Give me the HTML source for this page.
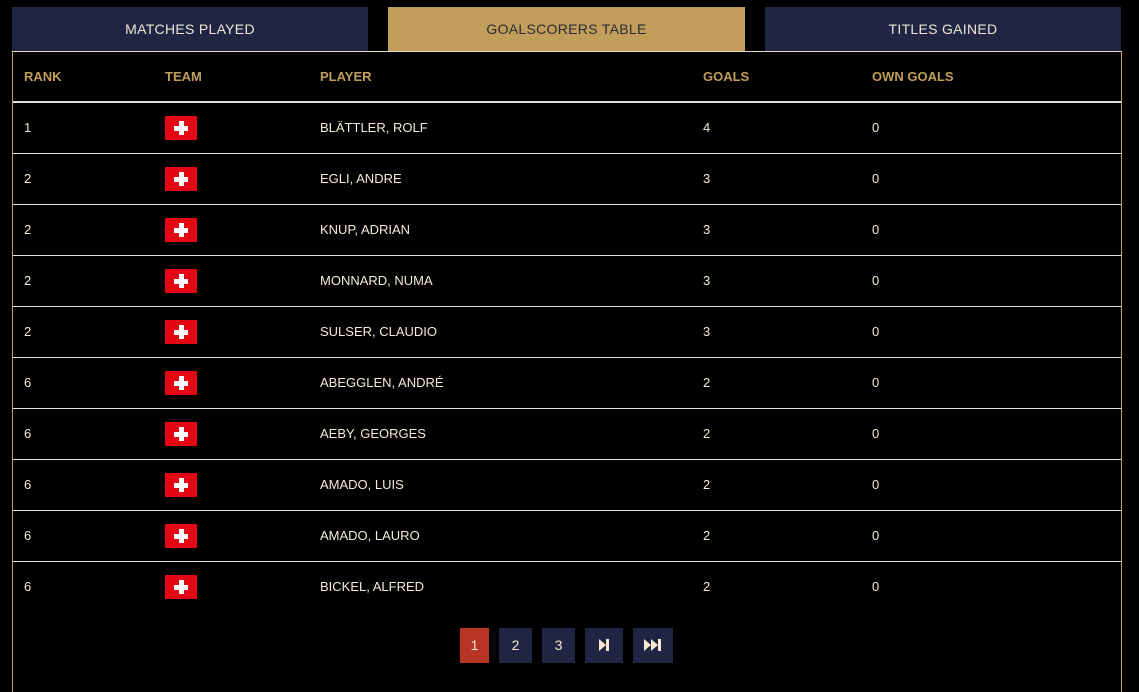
<!DOCTYPE html>
<html><head><style>
body{margin:0;background:#000;width:1139px;height:683px;overflow:hidden;font-family:"Liberation Sans",sans-serif;}
.tab{position:absolute;top:7px;height:44px;line-height:44px;text-align:center;font-size:14px;text-transform:uppercase;letter-spacing:0.3px;}
.box{position:absolute;left:12px;top:51px;width:1108px;height:640px;border-left:1px solid #c19e59;border-right:1px solid #c19e59;border-top:1px solid #e8dcc6;}
.row{position:absolute;left:0;width:1108px;height:50px;border-bottom:1px solid #e6e0d8;}
.c{position:absolute;top:0;line-height:50px;font-size:13px;color:#f3ead9;text-transform:uppercase;}
.h .c{color:#c19e59;font-weight:bold;}
.flag{position:absolute;left:152px;top:13px;width:32px;height:24px;background:#e30613;}
.flag:before{content:"";position:absolute;left:14px;top:5px;width:5px;height:14px;background:#fff}
.flag:after{content:"";position:absolute;left:9px;top:10px;width:14px;height:5px;background:#fff}
.pg{position:absolute;top:628px;height:35px;line-height:35px;text-align:center;color:#f6e9d2;font-size:14px;background:#1f2543;}
</style></head><body>
<div class="tab" style="left:12px;width:356px;background:#1f2543;color:#efe6d6">Matches Played</div>
<div class="tab" style="left:388px;width:357px;background:#c19e59;color:#2a2a3a">Goalscorers Table</div>
<div class="tab" style="left:765px;width:356px;background:#1f2543;color:#efe6d6">Titles Gained</div>
<div class="box">
<div class="row h" style="top:0;height:49px;border-bottom:2px solid #e6e0d8"><span class="c" style="left:11px">Rank</span><span class="c" style="left:152px">Team</span><span class="c" style="left:307px">Player</span><span class="c" style="left:690px">Goals</span><span class="c" style="left:859px">Own Goals</span></div>
<div class="row" style="top:51px"><span class="c" style="left:11px">1</span><div class="flag"></div><span class="c" style="left:307px">Blättler, Rolf</span><span class="c" style="left:690px">4</span><span class="c" style="left:859px">0</span></div>
<div class="row" style="top:102px"><span class="c" style="left:11px">2</span><div class="flag"></div><span class="c" style="left:307px">Egli, Andre</span><span class="c" style="left:690px">3</span><span class="c" style="left:859px">0</span></div>
<div class="row" style="top:153px"><span class="c" style="left:11px">2</span><div class="flag"></div><span class="c" style="left:307px">Knup, Adrian</span><span class="c" style="left:690px">3</span><span class="c" style="left:859px">0</span></div>
<div class="row" style="top:204px"><span class="c" style="left:11px">2</span><div class="flag"></div><span class="c" style="left:307px">Monnard, Numa</span><span class="c" style="left:690px">3</span><span class="c" style="left:859px">0</span></div>
<div class="row" style="top:255px"><span class="c" style="left:11px">2</span><div class="flag"></div><span class="c" style="left:307px">Sulser, Claudio</span><span class="c" style="left:690px">3</span><span class="c" style="left:859px">0</span></div>
<div class="row" style="top:306px"><span class="c" style="left:11px">6</span><div class="flag"></div><span class="c" style="left:307px">Abegglen, André</span><span class="c" style="left:690px">2</span><span class="c" style="left:859px">0</span></div>
<div class="row" style="top:357px"><span class="c" style="left:11px">6</span><div class="flag"></div><span class="c" style="left:307px">Aeby, Georges</span><span class="c" style="left:690px">2</span><span class="c" style="left:859px">0</span></div>
<div class="row" style="top:408px"><span class="c" style="left:11px">6</span><div class="flag"></div><span class="c" style="left:307px">Amado, Luis</span><span class="c" style="left:690px">2</span><span class="c" style="left:859px">0</span></div>
<div class="row" style="top:459px"><span class="c" style="left:11px">6</span><div class="flag"></div><span class="c" style="left:307px">Amado, Lauro</span><span class="c" style="left:690px">2</span><span class="c" style="left:859px">0</span></div>
<div class="row" style="top:510px;border-bottom:none"><span class="c" style="left:11px">6</span><div class="flag"></div><span class="c" style="left:307px">Bickel, Alfred</span><span class="c" style="left:690px">2</span><span class="c" style="left:859px">0</span></div>
</div>
<div class="pg" style="left:460px;width:29px;background:#b83424">1</div>
<div class="pg" style="left:499px;width:33px">2</div>
<div class="pg" style="left:542px;width:33px">3</div>
<div class="pg" style="left:585px;width:38px"><svg width="12" height="12" viewBox="0 0 12 12" style="vertical-align:-1px"><path d="M1 0L8 6L1 12Z M8 0H11V12H8Z" fill="#f6e9d2"/></svg></div>
<div class="pg" style="left:633px;width:40px"><svg width="18" height="12" viewBox="0 0 18 12" style="vertical-align:-1px"><path d="M0 0L7 6L0 12Z M7 0L14 6L7 12Z M14 0H17V12H14Z" fill="#f6e9d2"/></svg></div>
</body></html>
